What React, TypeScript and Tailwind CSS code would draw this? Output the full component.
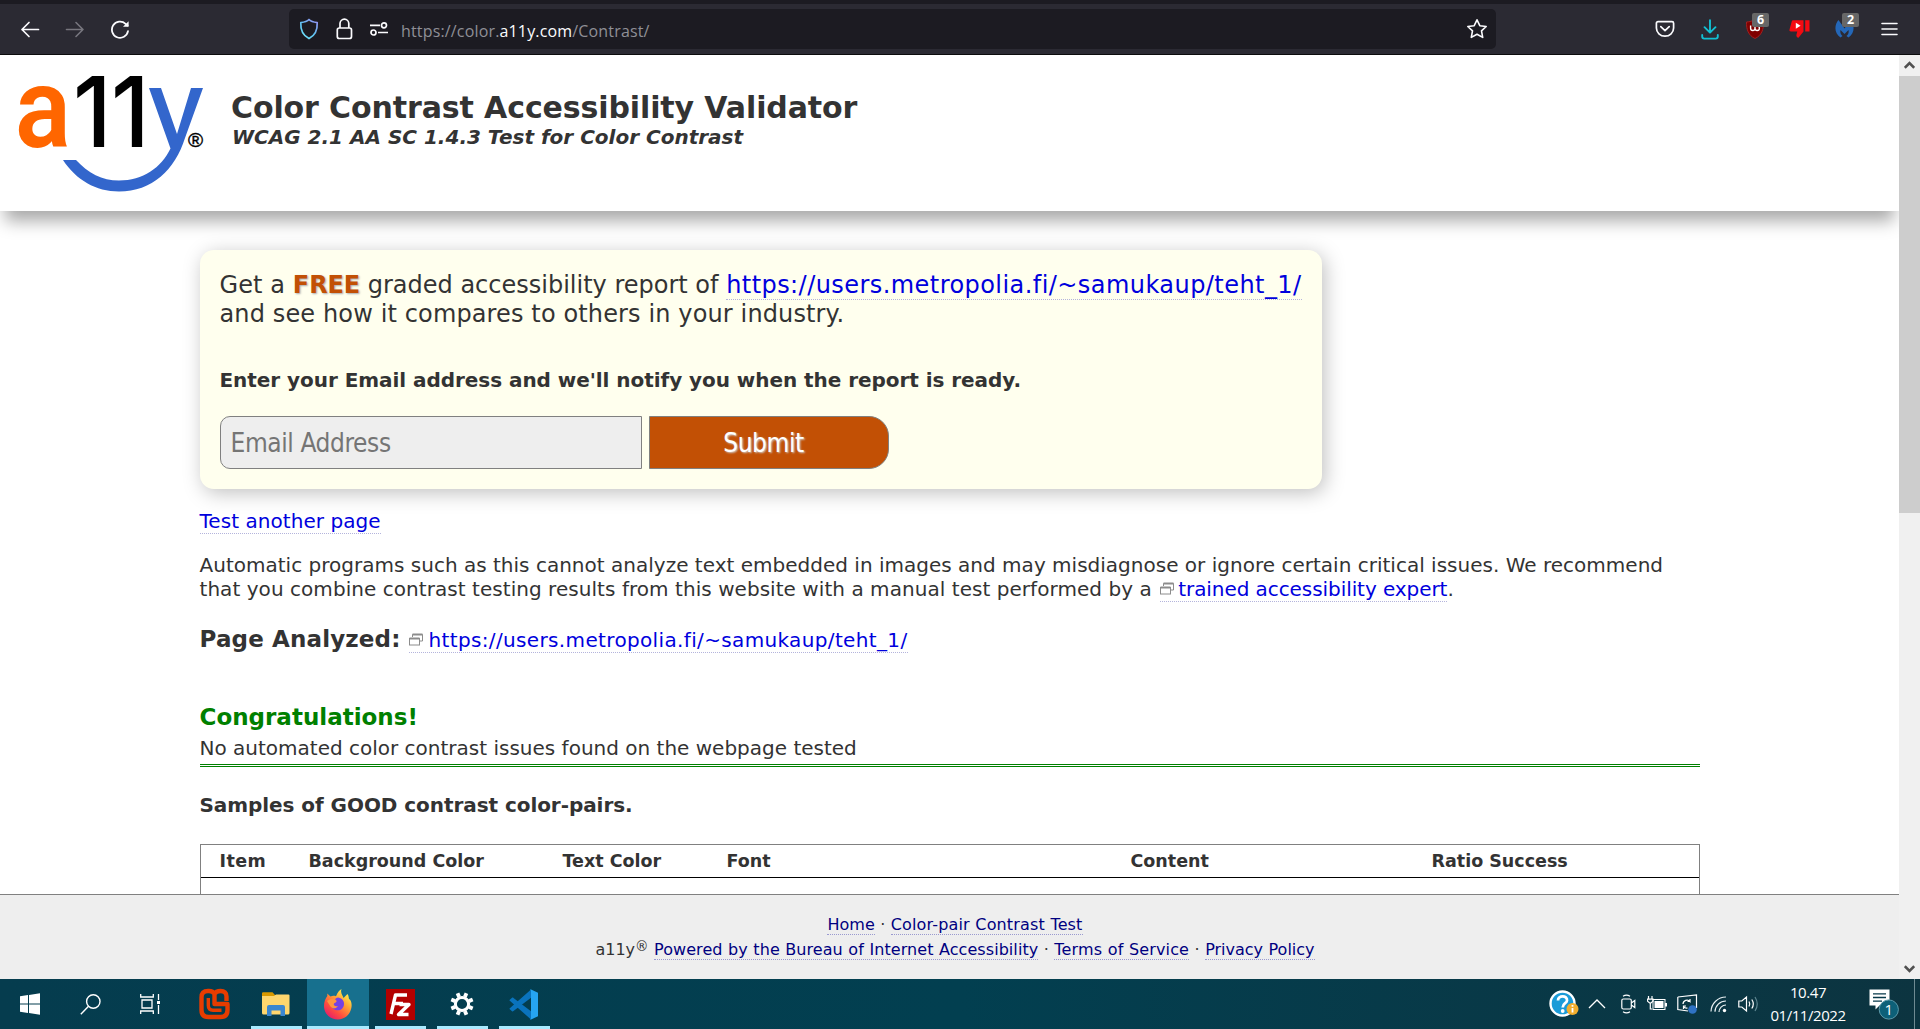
import type { ReactNode } from "react";

const link = "border-b border-dotted border-[#b4b4dc] text-[#0000dd]";
const footLink = "border-b border-dotted border-[#9a9ad0] text-[#000080]";

function Tool({ children }: { children: ReactNode }) {
  return <div className="relative flex h-[40px] w-[45px] shrink-0 items-center justify-center">{children}</div>;
}

function Badge({ children }: { children: ReactNode }) {
  return (
    <span className="absolute left-[20px] top-[4px] flex h-[14px] w-[17px] items-center justify-center rounded-[2px] bg-[#676767] font-['Open_Sans',sans-serif] text-[12.5px] font-bold leading-none text-white">
      {children}
    </span>
  );
}

function Toolbar() {
  return (
    <div className="flex h-[55px] shrink-0 flex-col border-b border-[#0c0c0d] bg-[#2b2a33]">
      <div className="h-[4px] shrink-0 bg-[#1c1b22]" />
      <div className="flex h-[50px] items-center pl-[7px] pr-[8px]">
        <Tool>
          <svg width="20" height="20" viewBox="0 0 20 20" fill="none" stroke="#fbfbfe" strokeWidth="1.7" strokeLinecap="round" strokeLinejoin="round">
            <path d="M18.5 10.5H2M9 3.5l-7 7 7 7" />
          </svg>
        </Tool>
        <Tool>
          <svg width="20" height="20" viewBox="0 0 20 20" fill="none" stroke="#77767e" strokeWidth="1.6" strokeLinecap="round" strokeLinejoin="round">
            <path d="M1.5 10.5H18M11 3.5l7 7-7 7" />
          </svg>
        </Tool>
        <Tool>
          <svg width="20" height="20" viewBox="0 0 20 20" fill="none" stroke="#fbfbfe" strokeWidth="1.8" strokeLinecap="round">
            <path d="M18 12.2A8.1 8.1 0 1 1 15.6 4.8L17.5 6.5" />
            <path d="M18.6 2.2v5.6h-5.6z" fill="#fbfbfe" stroke="none" />
          </svg>
        </Tool>
        <div className="ml-[147px] flex h-[40px] w-[1207px] items-center rounded-[5px] bg-[#1c1b22] pl-[10px] pr-[8px]">
          <svg width="20" height="22" viewBox="0 0 20 22" fill="none" strokeWidth="1.7" strokeLinejoin="round">
            <defs>
              <linearGradient id="shield" x1="1" y1="0" x2="0.3" y2="1">
                <stop offset="0" stopColor="#9a8ff5" />
                <stop offset="0.6" stopColor="#5fc0f0" />
                <stop offset="1" stopColor="#6fe3fb" />
              </linearGradient>
            </defs>
            <path stroke="url(#shield)" d="M10 1.5C12 3.6 15 4.2 18.2 4.6C18.6 12 16 17.5 10 20.6C4 17.5 1.4 12 1.8 4.6C5 4.2 8 3.6 10 1.5Z" />
          </svg>
          <svg className="ml-[17px]" width="17" height="22" viewBox="0 0 17 22" fill="none" stroke="#fbfbfe" strokeWidth="1.7">
            <rect x="1.3" y="10" width="14.2" height="10.5" rx="2" />
            <path d="M4 10V5.6a4.4 4.4 0 0 1 8.8 0V10" />
          </svg>
          <svg className="ml-[16px]" width="20" height="16" viewBox="0 0 20 16" fill="none" stroke="#fbfbfe" strokeWidth="1.7">
            <path d="M1 4.3h10M9 11.5h10" />
            <circle cx="15" cy="4.3" r="2.5" />
            <circle cx="4.5" cy="11.5" r="2.5" />
          </svg>
          <span className="ml-[12px] mt-[3px] font-['Open_Sans',sans-serif] text-[16px] tracking-[0.16px] text-[#8f8f96]">
            https://color.<span className="text-[#fbfbfe]">a11y.com</span>/Contrast/
          </span>
          <svg className="ml-auto" width="22" height="22" viewBox="0 0 22 22" fill="none" stroke="#fbfbfe" strokeWidth="1.6" strokeLinejoin="round">
            <path d="M11 1.8l2.8 5.9 6.4.8-4.7 4.4 1.2 6.5L11 16.2l-5.7 3.2 1.2-6.5L1.8 8.5l6.4-.8z" />
          </svg>
        </div>
        <div className="ml-auto flex">
          <Tool>
            <svg width="20" height="18" viewBox="0 0 20 18" fill="none" stroke="#fbfbfe" strokeWidth="1.7" strokeLinecap="round" strokeLinejoin="round">
              <path d="M3 1.6h14a1.6 1.6 0 0 1 1.6 1.6V8A8.6 8.2 0 0 1 1.4 8V3.200A1.600 1.600 0 0 1 3 1.600Z" />
              <path d="M5.800 6.600L10 10.600l4.200-4" />
            </svg>
          </Tool>
          <Tool>
            <svg width="18" height="21" viewBox="0 0 18 21" fill="none" stroke="#12bfd2" strokeWidth="1.9" strokeLinecap="round" strokeLinejoin="round">
              <path d="M9 1.200V13.500M3.500 8.200L9 13.700l5.500-5.500M1.200 16v1.600A2 2 0 0 0 3.200 19.600H14.800A2 2 0 0 0 16.800 17.600V16" />
            </svg>
          </Tool>
          <Tool>
            <svg width="18" height="20" viewBox="0 0 18 20">
              <path d="M9 0.500C11.500 2 14.500 2.800 17.500 3C17.800 10.500 15.500 16.500 9 19.500C2.500 16.500.2 10.500.5 3C3.500 2.800 6.500 2 9 .5Z" fill="#800000" stroke="#a02020" />
              <path d="M4.600 6.500v2.800a2.200 2.200 0 0 0 4.400 0V6.800M9 9.300a2.200 2.200 0 0 0 4.400 0q0-2.300-1.900-2.500" fill="none" stroke="#fff" strokeWidth="1.400" />
            </svg>
            <Badge>6</Badge>
          </Tool>
          <Tool>
            <svg width="21" height="20" viewBox="0 0 21 20">
              <path d="M4 1.200H14.500V12.500L9.500 18.800C8 18.500 7 17.500 7.500 15.500L8.300 12.500H2C.6 12.500.2 11.500.6 10.200L2.800 2.200C3 1.500 3.400 1.200 4 1.200Z" fill="#f40b12" />
              <path d="M16.200 1.200H20.500V12.500H16.200Z" fill="#f40b12" />
              <path d="M6.800 3.800v6l4.800-3z" fill="#fff" />
            </svg>
          </Tool>
          <Tool>
            <svg width="19" height="18" viewBox="0 0 19 18" fill="#2467b8">
              <path d="M3.500 0C-.8 5-1 13 5.500 17.500L7.500 16C5.500 14.500 5 12 5.500 10L9.500 14L13.500 10C14 12 13.500 14.500 11.500 16L13.500 17.500C20 13 19.800 5 15.500 0L9.500 8.500Z" />
            </svg>
            <Badge>2</Badge>
          </Tool>
          <Tool>
            <svg width="17" height="14" viewBox="0 0 17 14" stroke="#fbfbfe" strokeWidth="1.600" strokeLinecap="round">
              <path d="M1 1.500h15M1 7h15M1 12.500h15" />
            </svg>
          </Tool>
        </div>
      </div>
    </div>
  );
}

function Logo() {
  return (
    <svg className="ml-[12px] mt-[13px] shrink-0" width="200" height="130" viewBox="12 68 200 130">
      <text transform="translate(15 147) scale(0.92 1)" fontFamily="Roboto, sans-serif" fontWeight="600" fontSize="113" fill="#ff6600">a</text>
      <g fontFamily="Inter, sans-serif" fontWeight="500" fontSize="98" fill="#000">
        <text transform="translate(73 147) scale(0.95 1)">1</text>
        <text transform="translate(111 147) scale(0.95 1)">1</text>
      </g>
      <path fill="#3366cc" d="M149 88H161L177 134L191 88H203L185 138C175 170 152 191.500 119 191.500C96 191.500 76 180 63 160H76C88 173 102 180.500 119 180.500C143 180.500 161 168 170.500 148.500Z" />
      <text x="188" y="147" fontFamily="Liberation Sans, sans-serif" fontSize="20.500" fill="#000" stroke="#000" strokeWidth="0.400">®</text>
    </svg>
  );
}

function PopIcon() {
  return (
    <svg className="mr-[3px] inline-block align-[0px]" width="15" height="15" viewBox="0 0 15 15" fill="none" stroke="#8c8c8c">
      <path d="M3.500 5V2.500h10v6.500H11" />
      <path d="M3.500 2.500h10" strokeWidth="2" />
      <rect x="0.500" y="6.500" width="10" height="6.500" fill="#fff" />
      <path d="M.5 6.500h10" strokeWidth="2" />
    </svg>
  );
}

function Card() {
  return (
    <div className="h-[239px] w-[1122px] rounded-[14px] bg-[#ffffee] px-[20px] pt-[21px] shadow-[3px_4px_20px_rgba(0,0,0,0.25)]">
      <p className="whitespace-nowrap text-[24px] leading-[29px]">
        <span className="tracking-[0.100px]">Get a </span>
        <b className="tracking-[-0.100px] text-[#c25005] [text-shadow:1px_1px_2px_#aaa]">FREE</b>
        <span> graded accessibility report of </span>
        <a className={`tracking-[0.440px] ${link}`}>https://users.metropolia.fi/~samukaup/teht_1/</a>
        <br />
        <span className="tracking-[0.130px]">and see how it compares to others in your industry.</span>
      </p>
      <p className="mt-[39px] text-[20px] font-bold leading-[24px] tracking-[-0.050px]">Enter your Email address and we'll notify you when the report is ready.</p>
      <div className="mt-[24px] flex gap-[7px] font-['DejaVu_Sans_Condensed',sans-serif] text-[26px]">
        <div className="flex h-[53px] w-[422px] items-center rounded-l-[10px] border border-[#808080] bg-[#eeeeee] pl-[10px] pt-[1px] tracking-[-0.400px] text-[#757575]">
          Email Address
        </div>
        <button className="flex h-[53px] w-[240px] items-center justify-center rounded-r-[20px] border border-[#808080] bg-[#c25005] pr-[10px] pt-[1px] tracking-[-0.400px] text-white [text-shadow:1px_1px_2px_#ccc]">
          Submit
        </button>
      </div>
    </div>
  );
}

function Main() {
  return (
    <main className="mx-auto mt-[39px] w-[1500px] text-[20px] leading-[24px]">
      <Card />
      <p className="mt-[20px]"><a className={`tracking-[0.050px] ${link}`}>Test another page</a></p>
      <p className="mt-[20px] whitespace-nowrap">
        <span className="tracking-[0.010px]">Automatic programs such as this cannot analyze text embedded in images and may misdiagnose or ignore certain critical issues. We recommend</span>
        <br />
        <span className="tracking-[0.050px]">that you combine contrast testing results from this website with a manual test performed by a </span>
        <a className={`ml-[2px] tracking-[-0.070px] ${link}`}><PopIcon />trained accessibility expert</a>.
      </p>
      <div className="mt-[24px] flex h-[29px] items-baseline leading-[29px]">
        <h2 className="w-[209px] text-[23px] font-bold tracking-[0.140px]">Page Analyzed:</h2>
        <a className={`leading-[23px] tracking-[0.355px] ${link}`}><span className="pr-[2px]"><PopIcon /></span>https://users.metropolia.fi/~samukaup/teht_1/</a>
      </div>
      <h2 className="mt-[49px] text-[23px] font-bold leading-[29px] text-[#008000]">Congratulations!</h2>
      <p className="mt-[4px] border-b-[3px] border-double border-[#008000] pb-[4px]">
        No automated color contrast issues found on the webpage tested
      </p>
      <h3 className="mt-[26px] font-bold tracking-[-0.060px]">Samples of GOOD contrast color-pairs.</h3>
      <div className="mt-[27px] h-[80px] border border-b-0 border-[#808080]">
        <div className="grid h-[33px] grid-cols-[89px_254px_164px_404px_301px_1fr] border-b border-black pl-[19px] pt-[4px] text-[17.500px] font-bold">
          <span className="tracking-[0.400px]">Item</span>
          <span>Background Color</span>
          <span>Text Color</span>
          <span>Font</span>
          <span>Content</span>
          <span>Ratio Success</span>
        </div>
      </div>
    </main>
  );
}

function Scrollbar() {
  return (
    <div className="flex w-[21px] shrink-0 flex-col items-center bg-[#f0f0f0]">
      <svg className="h-[21px] shrink-0" width="11" viewBox="0 0 11 21" fill="none" stroke="#505050" strokeWidth="2.600"><path d="M.8 12.800l4.700-4.700 4.700 4.700" /></svg>
      <div className="h-[437px] w-full bg-[#cdcdcd]" />
      <svg className="mt-auto h-[21px] shrink-0" width="11" viewBox="0 0 11 21" fill="none" stroke="#505050" strokeWidth="2.600"><path d="M.8 8.200l4.700 4.700 4.700-4.700" /></svg>
    </div>
  );
}

function TaskItem({ children, bar = "", active = false }: { children: ReactNode; bar?: string; active?: boolean }) {
  return (
    <div className={`flex h-full w-[62px] flex-col items-center ${active ? "bg-[#17708e]" : ""}`}>
      <div className="flex flex-1 items-center pt-[3px]">{children}</div>
      <div className={`h-[3px] ${bar}`} />
    </div>
  );
}

const teeth = [0, 45, 90, 135, 180, 225, 270, 315];

function Taskbar() {
  const bar = "w-[51px] bg-[#a9eaff]";
  return (
    <div className="flex h-[50px] shrink-0 bg-linear-to-r from-[#053c4e] via-[#023f50] to-[#0c3440]">
      <div className="flex w-[60px] items-center justify-center">
        <svg width="20" height="22" viewBox="0 0 20 22" fill="#fff"><path d="M0 3.200L8 2v8.500H0zM9 1.900L20 .3v10.200H9zM0 11.500h8V20l-8-1.200zM9 11.500h11v10.200L9 20.100z" /></svg>
      </div>
      <div className="flex w-[60px] items-center justify-center">
        <svg width="21" height="21" viewBox="0 0 21 21" fill="none" stroke="#fff" strokeWidth="1.400"><circle cx="13.300" cy="7.500" r="6.700" /><path d="M8.500 12.300L.8 20.200" /></svg>
      </div>
      <div className="flex w-[60px] items-center justify-center">
        <svg width="20" height="20" viewBox="0 0 20 20" fill="none" stroke="#fff" strokeWidth="1.300"><path d="M.7 0v3h12.600V0M.7 20v-3h12.600v3M2 6h10v8H2zM18.500 0v6M18.500 11v9" /><path d="M17 7h3v3h-3z" fill="#fff" stroke="none" /></svg>
      </div>
      <div className="ml-[3px] flex">
        <TaskItem>
          <svg width="31" height="32" viewBox="0 0 31 31" fill="none" stroke="#e73c00" strokeLinejoin="round">
            <path d="M27.500 12.500V8Q27.500 2.500 21.500 2.500Q17 2.500 15.500 5.500Q14 2.500 10 2.500H9Q2.500 2.500 2.500 9V21.500Q2.500 28.500 9.500 28.500H21.500Q28.500 28.500 28.500 21.500V15.500H15.500V5" strokeWidth="4.400" />
            <path d="M9.300 9.500V17Q9.300 21.700 14 21.700H22.500" strokeWidth="3.400" />
          </svg>
        </TaskItem>
        <TaskItem bar={bar}>
          <svg width="28" height="24" viewBox="0 0 28 24">
            <path d="M0 1.500C0 .7.6.2 1.300.2H10.500L13 3H27V6H0z" fill="#d99a00" />
            <path d="M0 4H12l2-1.500H26.500a1 1 0 0 1 1 1V21a1.500 1.500 0 0 1-1.500 1.500H1.500A1.500 1.500 0 0 1 0 21z" fill="#ffd76e" />
            <path d="M5 24V15a2 2 0 0 1 2-2H21a2 2 0 0 1 2 2v9h-4.500v-5.500h-9V24z" fill="#3b87d0" />
          </svg>
        </TaskItem>
        <TaskItem active bar="w-full bg-[#a9eaff]">
          <svg width="30" height="31" viewBox="0 0 30 31">
            <defs>
              <linearGradient id="fox" x1="0.85" y1="0.1" x2="0.2" y2="0.95">
                <stop offset="0" stopColor="#fff44f" />
                <stop offset="0.35" stopColor="#ffa436" />
                <stop offset="0.7" stopColor="#ff4f3e" />
                <stop offset="1" stopColor="#e81e6a" />
              </linearGradient>
            </defs>
            <path d="M18.500 0C17 4 20 6.500 20.500 9L24.500 5C26 7 25.500 8.500 26 10C28 11 29 14 28.500 18C27.500 25.500 21.500 30.500 14.800 30.500C7 30.500 1 24.500 1 17C1 12.500 2.500 9.500 4.300 7V4.500L7.500 7.500C9.500 6.500 11.500 6.700 13 7.200C14.500 3.500 16 1.500 18.500 0Z" fill="url(#fox)" />
            <path d="M15 8.500C20.500 9 22 14 20.500 17.500C19 21 15.500 22 12.500 21C9.500 20 8 17.500 8.500 14.500L12.500 13.500C14 12.500 13.500 11 12 10.300C13 9.200 14 8.700 15 8.500Z" fill="#7542e5" />
            <path d="M4 12C7 9.500 11 10 13 11.500C14.500 12.800 12 13.500 11 14.500C10 16 12 18 15 17C13 20 9.500 20 7.500 17.500" fill="#ff9640" />
          </svg>
        </TaskItem>
        <TaskItem bar={bar}>
          <svg width="29" height="31" viewBox="0 0 29 31">
            <rect width="29" height="31" fill="#b30000" />
            <g fill="none" stroke="#fff" strokeWidth="3.400" strokeLinejoin="round">
              <path d="M5 25L9.500 6H21M7.500 14.500H17" />
              <path d="M13.500 15.500H23L12.500 25.500H22.500" />
            </g>
          </svg>
        </TaskItem>
        <TaskItem bar={bar}>
          <svg width="24" height="24" viewBox="-12 -12 24 24" fill="none" stroke="#fff">
            <circle r="6.600" strokeWidth="3" />
            {teeth.map((a) => (
              <path key={a} transform={`rotate(${a + 22.5})`} d="M0-7.500V-11.600" strokeWidth="3.800" />
            ))}
          </svg>
        </TaskItem>
        <TaskItem bar={bar}>
          <svg width="30" height="31" viewBox="0 0 30 31">
            <path d="M.5 11L3 8.800C3.500 8.500 4 8.500 4.500 8.900L22 22.300V30.500L.5 11.500z" fill="#0a73bd" />
            <path d="M.5 20L3 22.200C3.500 22.500 4 22.500 4.500 22.100L22 8.700V.5L.5 19.500z" fill="#0a73bd" />
            <path d="M21.500.3L29 3.700V27.300L21.500 30.700C20.800 31 21.800 30 22 29V2C21.800 1 20.800 0 21.500.3z" fill="#26a5f2" />
          </svg>
        </TaskItem>
      </div>
      <div className="ml-auto flex items-center text-white">
        <svg width="30" height="28" viewBox="0 0 30 28">
          <circle cx="13.500" cy="13.500" r="12" fill="#1b9bd8" stroke="#fff" strokeWidth="2.400" />
          <path d="M9 10.500C9 5 18.500 5 18 10.500C17.800 13.500 13.700 13 13.700 17.500" fill="none" stroke="#fff" strokeWidth="2.800" />
          <circle cx="13.700" cy="21" r="1.900" fill="#fff" />
          <circle cx="23.500" cy="19" r="6" fill="#f2ae2e" />
          <path d="M23.500 18v4.500M23.500 15v1.800" stroke="#fff" strokeWidth="1.800" />
        </svg>
        <svg className="ml-[9px]" width="18" height="10" viewBox="0 0 18 10" fill="none" stroke="#fff" strokeWidth="1.300"><path d="M1 9l8-8 8 8" /></svg>
        <svg className="ml-[14px]" width="17" height="20" viewBox="0 0 17 20" fill="none" stroke="#fff" strokeWidth="1.200"><rect x="1.800" y="5" width="9.500" height="10" rx="1.500" /><path d="M11.300 9l3.500-2.500v7L11.300 11M3 2.200Q6.500 0 10 2.200M3 17.800Q6.500 20 10 17.800" /></svg>
        <svg className="ml-[10px]" width="20" height="16" viewBox="0 0 20 16" fill="none" stroke="#fff" strokeWidth="1.200"><path d="M1.500 0v3M5 0v3M.5 3.200h5.500v2L3.300 7.500.5 5.200zM3.300 7.500V13H5" /><rect x="6" y="3.500" width="12" height="10" strokeWidth="1" /><path d="M7.500 5h9v7h-9z" fill="#fff" stroke="none" /><path d="M19 7v3.500" strokeWidth="2" /></svg>
        <svg className="ml-[10px]" width="21" height="20" viewBox="0 0 21 20" fill="none" stroke="#fff" strokeWidth="1.200"><path d="M.8 3L19.500.8V14M.8 3V15.500L11 17M6 10a4 4 0 0 1 7-2.500V5M13 7.500h-2.500M6.500 15v-3h2.500M6.500 12.500q1.500 2 4 1.500" /><circle cx="15.500" cy="15.500" r="4.300" fill="#2f72c4" stroke="none" /></svg>
        <svg className="ml-[12px]" width="18" height="17" viewBox="0 0 18 17" fill="none" stroke="#e8f0f2" strokeWidth="1.200"><path d="M1 15.500A15 15 0 0 1 16 1M5 15.800A11 11 0 0 1 16 5M9 16A7 7 0 0 1 16 9" /><circle cx="14.500" cy="14.500" r="1.700" fill="#fff" stroke="none" /></svg>
        <svg className="ml-[10px]" width="21" height="18" viewBox="0 0 21 18" fill="none" stroke="#fff" strokeWidth="1.200"><path d="M.8 6h3L8.500 2v14L3.800 12h-3zM11 6.500q1.500 2.500 0 5M13.800 4.500q3 4.500 0 9" /><path d="M17 2q4.500 7 0 14" stroke="#5f8792" /></svg>
        <div className="ml-[11px] w-[76px] text-center font-['Open_Sans',sans-serif] text-[15px] leading-[23px] tracking-[-0.440px]">
          <div>10.47</div>
          <div>01/11/2022</div>
        </div>
        <svg className="ml-[23px]" width="31" height="32" viewBox="0 0 31 32" fill="none">
          <path d="M.5 1.500H20.500V17.500H10.500L6.500 21.500V17.500H.5z" fill="#fff" />
          <path d="M4 5.800h13M4 9.500h13M4 13.200h9" stroke="#07394a" strokeWidth="1.300" />
          <circle cx="19.800" cy="21.500" r="9.600" fill="#0d6078" stroke="#5c9bac" />
          <text x="19.800" y="27" textAnchor="middle" fontFamily="Open Sans, sans-serif" fontSize="15" fill="#fff">1</text>
        </svg>
        <div className="ml-[14px] mr-[5px] h-[50px] w-px bg-[#6e8a92]" />
      </div>
    </div>
  );
}

export default function App() {
  return (
    <div className="flex h-[1029px] w-[1920px] flex-col overflow-hidden bg-white font-['DejaVu_Sans',Verdana,sans-serif] text-[#333333]">
      <Toolbar />
      <div className="flex h-[924px]">
        <div className="flex min-w-0 flex-1 flex-col overflow-hidden">
          <div className="h-[839px] shrink-0 overflow-hidden">
            <header className="flex h-[156px] bg-white shadow-[0_15px_16px_-5px_rgba(0,0,0,0.34)]">
              <Logo />
              <div className="ml-[19px] mt-[35px]">
                <h1 className="text-[30px] font-bold leading-[35px] tracking-[-0.110px]">Color Contrast Accessibility Validator</h1>
                <p className="pl-[1px] text-[20px] font-bold italic leading-[24px]">WCAG 2.1 AA SC 1.4.3 Test for Color Contrast</p>
              </div>
            </header>
            <Main />
          </div>
          <footer className="flex-1 border-t border-[#808080] bg-[#eeeeee] pl-[11px] pt-[17px] text-center text-[16px] leading-[25px] [word-spacing:0.4px]">
            <p>
              <a className={footLink}>Home</a> · <a className={`tracking-[0.140px] ${footLink}`}>Color-pair Contrast Test</a>
            </p>
            <p>
              a11y<sup className="top-0 align-[4px] text-[13.500px] leading-none">®</sup> <a className={`tracking-[0.060px] ${footLink}`}>Powered by the Bureau of Internet Accessibility</a> ·{" "}
              <a className={`tracking-[0.130px] ${footLink}`}>Terms of Service</a> · <a className={footLink}>Privacy Policy</a>
            </p>
          </footer>
        </div>
        <Scrollbar />
      </div>
      <Taskbar />
    </div>
  );
}
